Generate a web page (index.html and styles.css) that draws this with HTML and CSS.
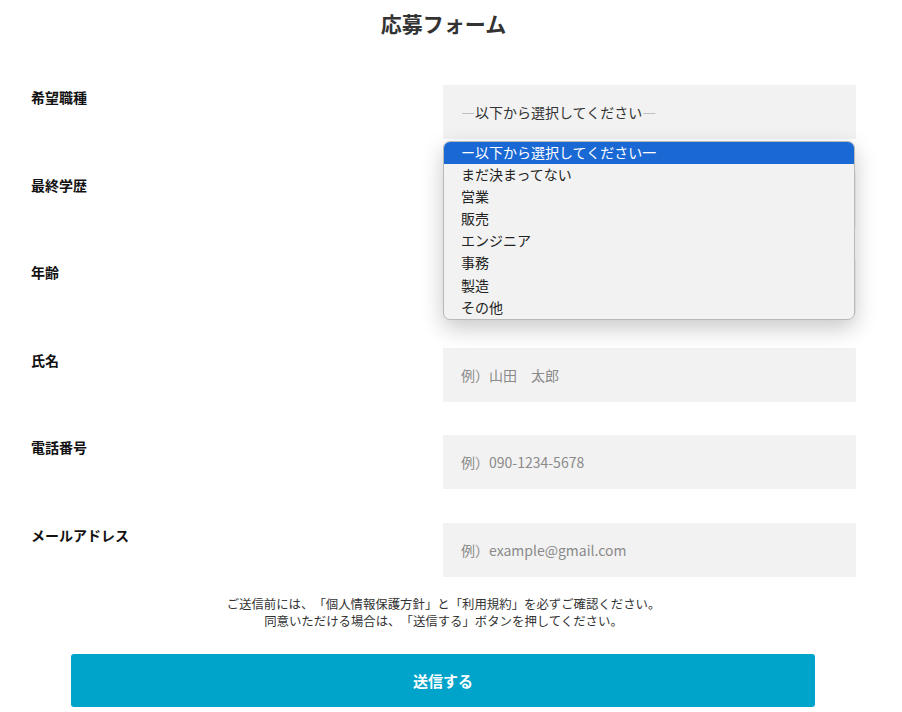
FILE: index.html
```html
<!DOCTYPE html>
<html lang="ja">
<head>
<meta charset="utf-8">
<title>応募フォーム</title>
<link rel="stylesheet" href="styles.css">
</head>
<body>
<div class="page">
  <h1 class="title">応募フォーム</h1>
  <form class="form">
    <div class="row">
      <div class="label">希望職種</div>
      <div class="field">
        <div class="select"><span class="dash">―</span>以下から選択してください<span class="dash">―</span></div>
        <ul class="menu">
          <li class="opt active">ー以下から選択してください一</li>
          <li class="opt">まだ決まってない</li>
          <li class="opt">営業</li>
          <li class="opt">販売</li>
          <li class="opt">エンジニア</li>
          <li class="opt">事務</li>
          <li class="opt">製造</li>
          <li class="opt">その他</li>
        </ul>
      </div>
    </div>
    <div class="row">
      <div class="label">最終学歴</div>
      <div class="field"><div class="select"></div></div>
    </div>
    <div class="row">
      <div class="label">年齢</div>
      <div class="field"><div class="select"></div></div>
    </div>
    <div class="row">
      <div class="label">氏名</div>
      <div class="field"><input class="input" type="text" placeholder="例）山田　太郎"></div>
    </div>
    <div class="row">
      <div class="label">電話番号</div>
      <div class="field"><input class="input" type="text" placeholder="例）090-1234-5678"></div>
    </div>
    <div class="row">
      <div class="label">メールアドレス</div>
      <div class="field"><input class="input" type="text" placeholder="例）example@gmail.com"></div>
    </div>
    <p class="note">ご送信前には、「個人情報保護方針」と「利用規約」を必ずご確認ください。<br>同意いただける場合は、「送信する」ボタンを押してください。</p>
    <button class="submit" type="button">送信する</button>
  </form>
</div>
</body>
</html>
```
FILE: styles.css
```css
* { box-sizing: border-box; }
body {
  margin: 0;
  background: #fff;
  color: #333;
  font-family: "Noto Sans CJK JP", "Noto Sans", sans-serif;
}
.page {
  width: 825px;
  margin-left: 31px;
}
.title {
  margin: 0;
  padding-top: 7px;
  font-size: 21px;
  line-height: 33px;
  font-weight: 700;
  text-align: center;
  color: #333;
}
.form {
  margin-top: 45px;
}
.row {
  display: grid;
  grid-template-columns: 412px 413px;
  margin-bottom: 33.5px;
}
.label {
  font-size: 14px;
  font-weight: 700;
  line-height: 22px;
  padding-top: 1px;
  color: #111;
}
.field {
  position: relative;
}
.select, .input {
  display: block;
  width: 100%;
  height: 54px;
  padding: 0 18px;
  border: none;
  background: #f2f2f2;
  font-family: inherit;
  font-size: 14px;
  line-height: 54px;
  color: #333;
  outline: none;
}
.select .dash { color: #999; font-weight: 300; }
.input::placeholder { color: #8a8a8a; }
.menu {
  position: absolute;
  left: 0;
  top: 56px;
  width: 412px;
  margin: 0;
  padding: 0;
  list-style: none;
  background: #f2f2f2;
  border: 1px solid #b9b9b9;
  border-radius: 7px;
  overflow: hidden;
  box-shadow: 0 8px 22px rgba(0,0,0,0.22);
  z-index: 2;
}
.opt {
  height: 22.1px;
  line-height: 20.1px;
  padding: 0 0 2px 17px;
  font-size: 14px;
  color: #222;
}
.opt.active {
  background: #1a68d4;
  color: #fff;
}
.note {
  margin: -14.5px 0 0;
  font-size: 12.4px;
  line-height: 17px;
  text-align: center;
  color: #333;
  text-spacing-trim: space-all;
}
.submit {
  display: block;
  width: 744px;
  height: 53px;
  margin: 24.5px 0 0 40px;
  border: none;
  border-radius: 3px;
  background: #00a3c9;
  color: #fff;
  font-family: inherit;
  font-size: 15px;
  font-weight: 700;
  line-height: 53px;
  padding: 0;
}
```
